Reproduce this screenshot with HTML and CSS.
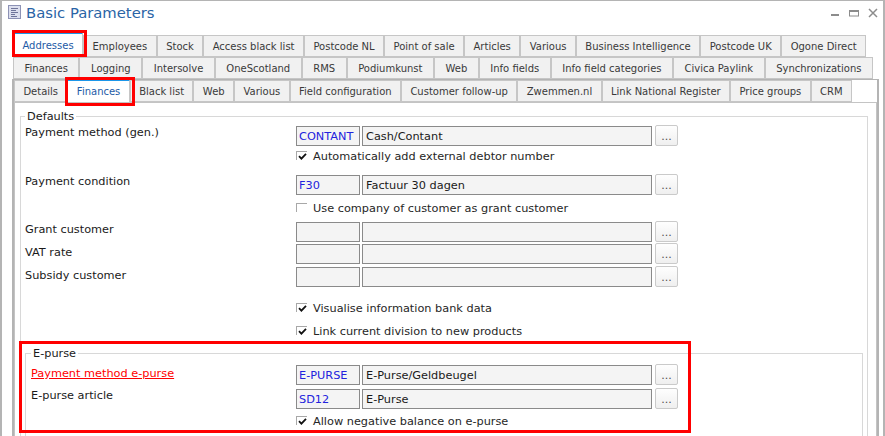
FILE: index.html
```html
<!DOCTYPE html>
<html lang="en">
<head>
<meta charset="utf-8">
<title>Basic Parameters</title>
<link rel="stylesheet" href="styles.css">
</head>
<body>
<div class="window">
  <header class="titlebar">
    <svg class="app-icon" width="13" height="14" viewBox="0 0 13 14" aria-hidden="true">
      <rect x="0.5" y="0.5" width="12" height="13" fill="#dcdfee" stroke="#8d92b5"/>
      <path d="M3 3.5h7M3 5.5h5M3 7.5h7M3 9.5h4M3 11.5h6" stroke="#6f7499" stroke-width="1"/>
    </svg>
    <h1 class="title">Basic Parameters</h1>
    <div class="controls">
      <svg width="10" height="10" viewBox="0 0 10 10" aria-hidden="true"><rect x="1" y="6" width="8" height="2" fill="#8c8c8c"/></svg>
      <svg width="10" height="10" viewBox="0 0 10 10" aria-hidden="true"><rect x="0.5" y="2.5" width="9" height="5.5" fill="none" stroke="#8c8c8c"/><rect x="0" y="2" width="10" height="2" fill="#8c8c8c"/></svg>
      <svg width="10" height="10" viewBox="0 0 10 10" aria-hidden="true"><path d="M1 1L9 9M9 1L1 9" stroke="#8c8c8c" stroke-width="1.5"/></svg>
    </div>
  </header>

  <div class="tabrow row1">
    <div class="tab active">Addresses</div>
    <div class="tab">Employees</div>
    <div class="tab">Stock</div>
    <div class="tab">Access black list</div>
    <div class="tab">Postcode NL</div>
    <div class="tab">Point of sale</div>
    <div class="tab">Articles</div>
    <div class="tab">Various</div>
    <div class="tab">Business Intelligence</div>
    <div class="tab">Postcode UK</div>
    <div class="tab">Ogone Direct</div>
  </div>
  <div class="tabrow row2">
    <div class="tab">Finances</div>
    <div class="tab">Logging</div>
    <div class="tab">Intersolve</div>
    <div class="tab">OneScotland</div>
    <div class="tab">RMS</div>
    <div class="tab">Podiumkunst</div>
    <div class="tab">Web</div>
    <div class="tab">Info fields</div>
    <div class="tab">Info field categories</div>
    <div class="tab">Civica Paylink</div>
    <div class="tab">Synchronizations</div>
  </div>

  <div class="outer-page">
    <div class="tabrow row3">
      <div class="tab">Details</div>
      <div class="tab active">Finances</div>
      <div class="tab">Black list</div>
      <div class="tab">Web</div>
      <div class="tab">Various</div>
      <div class="tab">Field configuration</div>
      <div class="tab">Customer follow-up</div>
      <div class="tab">Zwemmen.nl</div>
      <div class="tab">Link National Register</div>
      <div class="tab">Price groups</div>
      <div class="tab">CRM</div>
    </div>

    <div class="inner-page">
      <fieldset class="group defaults">
        <legend>Defaults</legend>

        <div class="frow gap-3">
          <span class="lbl">Payment method (gen.)</span>
          <span class="code">CONTANT</span>
          <span class="desc">Cash/Contant</span>
          <button type="button" class="more">...</button>
        </div>
        <div class="crow gap-4">
          <span class="lbl"></span>
          <span class="cb"><svg class="tick" width="9" height="7" viewBox="0 0 9 7"><path d="M1 3.2L3.4 5.6L8 0.9"/></svg></span>
          <span class="ctext">Automatically add external debtor number</span>
        </div>

        <div class="frow gap-12">
          <span class="lbl">Payment condition</span>
          <span class="code">F30</span>
          <span class="desc">Factuur 30 dagen</span>
          <button type="button" class="more">...</button>
        </div>
        <div class="crow gap-7">
          <span class="lbl"></span>
          <span class="cb"></span>
          <span class="ctext">Use company of customer as grant customer</span>
        </div>

        <div class="frow gap-7">
          <span class="lbl low1">Grant customer</span>
          <span class="code"></span>
          <span class="desc"></span>
          <button type="button" class="more">...</button>
        </div>
        <div class="frow gap-2">
          <span class="lbl low2">VAT rate</span>
          <span class="code"></span>
          <span class="desc"></span>
          <button type="button" class="more">...</button>
        </div>
        <div class="frow gap-3">
          <span class="lbl low2">Subsidy customer</span>
          <span class="code"></span>
          <span class="desc"></span>
          <button type="button" class="more">...</button>
        </div>

        <div class="crow gap-15">
          <span class="lbl"></span>
          <span class="cb"><svg class="tick" width="9" height="7" viewBox="0 0 9 7"><path d="M1 3.2L3.4 5.6L8 0.9"/></svg></span>
          <span class="ctext">Visualise information bank data</span>
        </div>
        <div class="crow gap-10">
          <span class="lbl"></span>
          <span class="cb"><svg class="tick" width="9" height="7" viewBox="0 0 9 7"><path d="M1 3.2L3.4 5.6L8 0.9"/></svg></span>
          <span class="ctext">Link current division to new products</span>
        </div>

        <fieldset class="group epurse">
          <legend>E-purse</legend>
          <div class="frow gap-5">
            <span class="lbl low2"><a class="link" href="#">Payment method e-purse</a></span>
            <span class="code">E-PURSE</span>
            <span class="desc">E-Purse/Geldbeugel</span>
            <button type="button" class="more">...</button>
          </div>
          <div class="frow gap-4">
            <span class="lbl">E-purse article</span>
            <span class="code">SD12</span>
            <span class="desc">E-Purse</span>
            <button type="button" class="more">...</button>
          </div>
          <div class="crow gap-6">
            <span class="lbl"></span>
            <span class="cb"><svg class="tick" width="9" height="7" viewBox="0 0 9 7"><path d="M1 3.2L3.4 5.6L8 0.9"/></svg></span>
            <span class="ctext">Allow negative balance on e-purse</span>
          </div>
        </fieldset>
      </fieldset>
    </div>
  </div>

  <div class="mark mark-addresses"></div>
  <div class="mark mark-finances"></div>
  <div class="mark mark-epurse"></div>
</div>
</body>
</html>
```

FILE: styles.css
```css
* { box-sizing: border-box; }

html, body {
  margin: 0;
  padding: 0;
  background: #ffffff;
}

body {
  font-family: "DejaVu Sans", Verdana, sans-serif;
  font-size: 11.3px;
  color: #1a1a1a;
}

.window {
  position: relative;
  width: 885px;
  height: 436px;
  overflow: hidden;
  background: #ffffff;
  border: solid #b4b4b4;
  border-width: 1px 2px 0 2px;
}

/* Title bar */
.titlebar {
  display: flex;
  align-items: flex-start;
  height: 34px;
  padding: 3px 5px 0 6px;
}

.app-icon {
  flex: none;
  margin-top: 1px;
}

.title {
  margin: 0 0 0 5px;
  font: 400 14.8px/18px "DejaVu Sans", Verdana, sans-serif;
  color: #2a64a6;
}

.controls {
  margin-left: auto;
  margin-top: 4px;
  display: flex;
  gap: 9px;
}

/* Tabs */
.tabrow {
  display: flex;
  align-items: flex-end;
  height: 22px;
}

.row1 { margin-left: 11px; width: 853px; }
.row2 { margin-left: 11px; width: 860px; }
.row3 { width: 838px; }

.tab {
  flex: 1 1 auto;
  height: 22px;
  padding: 0 7.5px;
  border: 1px solid #c6c6c6;
  background: #f1f1f1;
  font: 10px/22px "DejaVu Sans", Verdana, sans-serif;
  color: #3a3a3a;
  text-align: center;
  white-space: nowrap;
}

.tab.active {
  height: 25px;
  line-height: 23px;
  background: #ffffff;
  border-top: 2px solid #1c97ea;
  color: #1d5aa6;
}

.row3 .tab.active {
  height: 23px;
  line-height: 22px;
  border-bottom: 0;
}

/* Pages */
.outer-page {
  margin-left: 10px;
  width: 867px;
  height: 400px;
  border: solid #b4b4b4;
  border-width: 1px 2px 0 2px;
}

.inner-page {
  height: 380px;
  padding: 0 8px 0 5px;
  border: solid #c4c4c4;
  border-width: 1px 1px 0 1px;
  background: #ffffff;
}

/* Group boxes */
.group {
  margin: 7px 0 0 0;
  padding: 0 0 10px 0;
  min-width: 0;
  border: 1px solid #d8d8d8;
}

.group > legend {
  margin-left: 4px;
  padding: 0 2px;
  font-size: 11.3px;
  line-height: 13px;
  color: #1a1a1a;
}

.group.epurse {
  margin: 9px 4px 0 4px;
}

.group.epurse > legend {
  margin-left: 5px;
}

/* Rows */
.frow {
  display: flex;
  align-items: flex-start;
  height: 20px;
  padding-left: 4px;
}

.crow {
  display: flex;
  align-items: flex-start;
  height: 13px;
  line-height: 13px;
  padding-left: 4px;
}

.epurse .frow,
.epurse .crow { padding-left: 5px; }

.lbl {
  flex: none;
  width: 271px;
  line-height: 13px;
  color: #1a1a1a;
}

.epurse .lbl { width: 265px; }

.lbl.low1 { padding-top: 1px; }
.lbl.low2 { padding-top: 2px; }

.link {
  color: #ff0000;
  text-decoration: underline;
}

.gap-2 { margin-top: 2px; }
.gap-3 { margin-top: 3px; }
.gap-4 { margin-top: 4px; }
.gap-5 { margin-top: 5px; }
.gap-6 { margin-top: 6px; }
.gap-7 { margin-top: 7px; }
.gap-10 { margin-top: 10px; }
.gap-12 { margin-top: 12px; }
.gap-15 { margin-top: 15px; }

/* Fields */
.code,
.desc {
  flex: none;
  height: 20px;
  border: 1px solid #8a8a8a;
  background: #f4f4f4;
  line-height: 18px;
  padding-top: 1px;
  white-space: nowrap;
}

.code {
  width: 64px;
  padding-left: 2px;
  color: #2222dd;
}

.desc {
  width: 290px;
  margin-left: 2px;
  padding-left: 3px;
  color: #1a1a1a;
}

.more {
  flex: none;
  width: 23px;
  height: 21px;
  margin: -1px 0 0 3px;
  padding: 0 0 3px 0;
  border: 1px solid #cacaca;
  border-radius: 2px;
  background: linear-gradient(#fefefe, #efefef);
  font: 11px/1 "DejaVu Sans", Verdana, sans-serif;
  color: #505050;
  display: flex;
  align-items: flex-end;
  justify-content: center;
}

/* Checkboxes */
.cb {
  flex: none;
  display: flex;
  width: 11px;
  height: 9px;
  margin: 1px 6px 0 0;
  padding: 1px 0 0 1px;
  border-top: 1px solid #a8a8a8;
  border-left: 1px solid #a8a8a8;
}

.tick path {
  fill: none;
  stroke: #111111;
  stroke-width: 1.8;
}

.ctext {
  color: #262626;
  white-space: nowrap;
}

/* Annotation frames */
.mark {
  position: absolute;
  border: 3px solid #ff0000;
  pointer-events: none;
}

.mark-addresses { left: 10px; top: 29px; width: 75px; height: 27px; }
.mark-finances  { left: 63px; top: 76px; width: 70px; height: 29px; }
.mark-epurse    { left: 17px; top: 340px; width: 672px; height: 92px; }
```
